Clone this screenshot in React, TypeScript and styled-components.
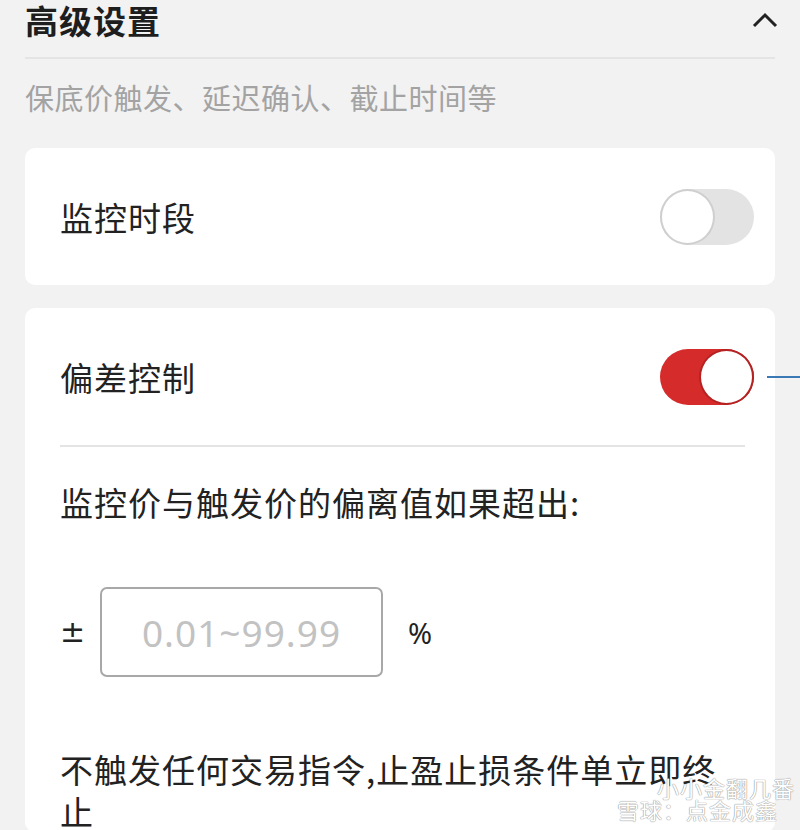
import React, { FC } from 'react'
import styled, { createGlobalStyle } from 'styled-components'

const GlobalStyle = createGlobalStyle`
    html, body {
        margin: 0;
        padding: 0;
        background: #f2f2f2;
    }
    body {
        font-family: "Noto Sans CJK SC", "Noto Sans", sans-serif;
        color: #222;
    }
`

const Page = styled.div`
    position: relative;
    width: 800px;
    height: 830px;
    overflow: hidden;
    box-sizing: border-box;
    padding: 0 25px;
    background: #f2f2f2;
`

const Header = styled.div`
    display: flex;
    align-items: center;
    justify-content: space-between;
    height: 40px;
`

const Title = styled.h1`
    margin: 0;
    font-size: 33px;
    font-weight: 700;
    line-height: 40px;
    letter-spacing: 1px;
    color: #1e1e1e;
`

const Chevron = styled.svg`
    width: 26px;
    height: 16px;
    margin-right: -3px;
`

const Rule = styled.div<{ inset?: boolean }>`
    height: 2px;
    background: #e4e4e4;
    margin: ${({ inset }) => (inset ? '0 30px 0 35px' : '17px 0 0')};
`

const Subtitle = styled.p`
    margin: 18px 0 0;
    font-size: 29px;
    line-height: 40px;
    letter-spacing: 0.5px;
    color: #a3a3a3;
`

const Card = styled.section<{ first?: boolean }>`
    background: #fff;
    border-radius: 10px;
    margin-top: ${({ first }) => (first ? '31px' : '23px')};
`

const Row = styled.div`
    display: flex;
    align-items: center;
    justify-content: space-between;
    height: 137px;
    padding: 0 21px 0 35px;
`

const Label = styled.span`
    font-size: 33px;
    line-height: 40px;
    letter-spacing: 1px;
    color: #222;
`

const SwitchTrack = styled.div<{ on?: boolean }>`
    position: relative;
    width: 94px;
    height: 56px;
    border-radius: 28px;
    background: ${({ on }) => (on ? '#d62b2b' : '#e3e3e3')};
    flex-shrink: 0;
`

const Knob = styled.div<{ on?: boolean }>`
    position: absolute;
    top: 0;
    left: ${({ on }) => (on ? '39px' : '0')};
    width: 55px;
    height: 56px;
    box-sizing: border-box;
    border-radius: 50%;
    background: #fff;
    border: 2px solid ${({ on }) => (on ? '#b52222' : '#cfcfcf')};
`

const Pointer = styled.div`
    position: absolute;
    top: 27px;
    left: 107px;
    width: 40px;
    height: 2px;
    background: #3b79b6;
`

const Body = styled.div`
    padding: 35px 30px 0 35px;
`

const Question = styled.p`
    margin: 0;
    font-size: 33px;
    line-height: 40px;
    letter-spacing: 1px;
    color: #222;
`

const InputRow = styled.div`
    display: flex;
    align-items: center;
    gap: 23px;
    margin-top: 65px;
`

const Sign = styled.span`
    display: inline-block;
    width: 17px;
    font-family: "DejaVu Sans", sans-serif;
    font-size: 30px;
    line-height: 40px;
    color: #222;
`

const Field = styled.input`
    width: 283px;
    height: 90px;
    box-sizing: border-box;
    border: 2px solid #a8a8a8;
    border-radius: 7px;
    background: #fff;
    text-align: center;
    font-family: "Noto Sans", sans-serif;
    font-size: 37px;
    letter-spacing: 1px;
    outline: none;
    &::placeholder {
        color: #c2c2c2;
    }
`

const Unit = styled.span`
    font-family: "Noto Sans", sans-serif;
    font-size: 29px;
    margin-left: 2px;
    color: #222;
`

const Result = styled.p`
    margin: 71px 0 0;
    font-size: 33px;
    line-height: 42px;
    letter-spacing: 1px;
    color: #222;
`

const Watermark = styled.div`
    position: absolute;
    left: 583px;
    top: 776px;
    display: flex;
    align-items: flex-end;
    gap: 6px;
    white-space: nowrap;
    color: #fff;
    pointer-events: none;
    text-shadow: 0 0 1px #8a8a8a, 0 0 1px #8a8a8a;
`

const MarkText = styled.div`
    display: flex;
    flex-direction: column;
    font-size: 22px;
    line-height: 22px;
    letter-spacing: 1px;
`

const MarkTop = styled.span`
    margin-left: 40px;
`

const Switch: FC<{ on?: boolean; annotated?: boolean }> = ({ on, annotated }) => (
    <SwitchTrack on={on}>
        <Knob on={on} />
        {annotated && <Pointer />}
    </SwitchTrack>
)

export default function App() {
    return (
        <Page>
            <GlobalStyle />
            <Header>
                <Title>高级设置</Title>
                <Chevron viewBox="0 0 26 16">
                    <polyline points="2,14 13,3 24,14" fill="none" stroke="#222" strokeWidth="3" />
                </Chevron>
            </Header>
            <Rule />
            <Subtitle>保底价触发、延迟确认、截止时间等</Subtitle>

            <Card first>
                <Row>
                    <Label>监控时段</Label>
                    <Switch />
                </Row>
            </Card>

            <Card>
                <Row>
                    <Label>偏差控制</Label>
                    <Switch on annotated />
                </Row>
                <Rule inset />
                <Body>
                    <Question>监控价与触发价的偏离值如果超出:</Question>
                    <InputRow>
                        <Sign>±</Sign>
                        <Field placeholder="0.01~99.99" />
                        <Unit>%</Unit>
                    </InputRow>
                    <Result>不触发任何交易指令,止盈止损条件单立即终止</Result>
                </Body>
            </Card>

            <Watermark>
                <svg width="28" height="28" viewBox="0 0 28 28">
                    <circle cx="14" cy="14" r="12" fill="none" stroke="#fff" strokeWidth="2.5" />
                    <path d="M8 8 L20 20 M20 8 L8 20" stroke="#fff" strokeWidth="2.5" />
                </svg>
                <MarkText>
                    <MarkTop>小小金翻几番</MarkTop>
                    <span>雪球：点金成鑫</span>
                </MarkText>
            </Watermark>
        </Page>
    )
}
